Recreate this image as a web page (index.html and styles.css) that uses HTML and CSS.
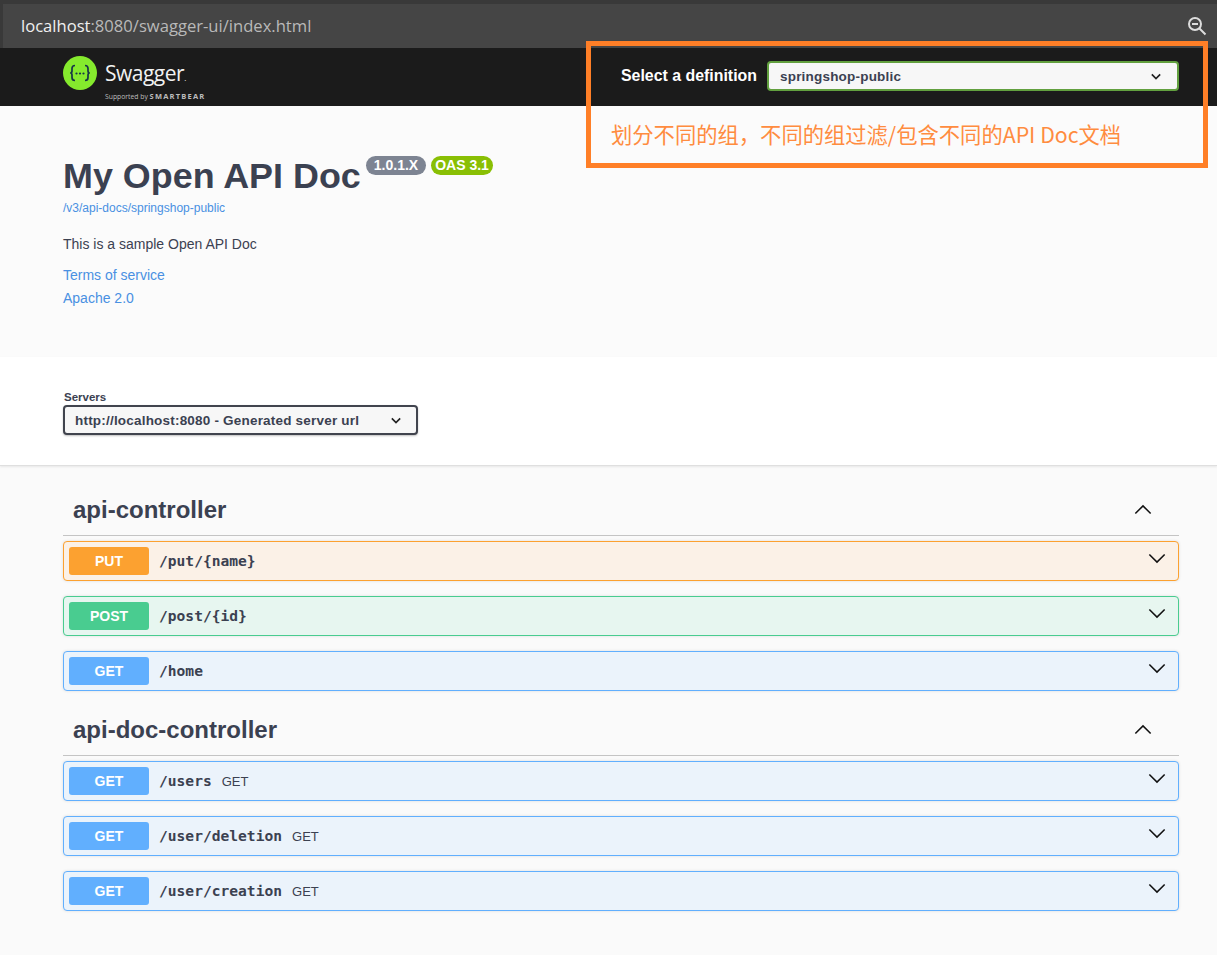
FILE: index.html
```html
<!DOCTYPE html>
<html lang="en">
<head>
    <meta charset="UTF-8">
    <meta name="viewport" content="width=device-width, initial-scale=1.0">
    <title>Swagger UI</title>
    <link rel="stylesheet" href="styles.css">
</head>
<body>
    <div class="url-bar">
        <div class="url-field">
            <span class="url-text"><span class="url-host">localhost</span>:8080/swagger-ui/index.html</span>
            <svg class="zoom-icon" viewBox="0 0 20 20" width="20" height="20" fill="none" stroke="#dcdcdc" stroke-width="2">
                <circle cx="8" cy="8" r="6"/>
                <path d="M5 8h6M12.500 12.500l6 6"/>
            </svg>
        </div>
    </div>

    <header class="topbar">
        <div class="logo">
            <svg class="logo-mark" viewBox="0 0 34 34" width="34" height="34">
                <circle cx="17" cy="17" r="17" fill="#85ea2d"/>
                <path d="M12 9.500c-2.600 0-3 1.200-3 3v2.500c0 1.300-.7 2-1.800 2 1.100 0 1.800.7 1.800 2v2.500c0 1.800.4 3 3 3M22 9.500c2.600 0 3 1.200 3 3v2.500c0 1.300.7 2 1.800 2-1.100 0-1.800.7-1.800 2v2.500c0 1.800-.4 3-3 3" fill="none" stroke="#173647" stroke-width="1.700"/>
                <circle cx="13.500" cy="17.500" r="1.100" fill="#173647"/>
                <circle cx="17" cy="17.500" r="1.100" fill="#173647"/>
                <circle cx="20.500" cy="17.500" r="1.100" fill="#173647"/>
            </svg>
            <div class="logo-text">
                <span class="logo-name">Swagger<small>.</small></span>
                <span class="logo-sub">Supported by <b>SMARTBEAR</b></span>
            </div>
        </div>
        <div class="definition">
            <span class="definition-label">Select a definition</span>
            <div class="select definition-select">
                <span>springshop-public</span>
                <svg viewBox="0 0 12 8" width="10" height="7" fill="none" stroke="#222" stroke-width="2"><path d="M1 1.500l5 5 5-5"/></svg>
            </div>
        </div>
    </header>

    <section class="info">
        <div class="title-row">
            <h1>My Open API Doc</h1>
            <div class="badges">
                <span class="badge badge-version">1.0.1.X</span>
                <span class="badge badge-oas">OAS 3.1</span>
            </div>
        </div>
        <a class="doc-link">/v3/api-docs/springshop-public</a>
        <p class="description">This is a sample Open API Doc</p>
        <a class="info-link terms">Terms of service</a>
        <a class="info-link">Apache 2.0</a>
    </section>

    <section class="servers">
        <div class="servers-label">Servers</div>
        <div class="select servers-select">
            <span>http://localhost:8080 - Generated server url</span>
            <svg viewBox="0 0 12 8" width="10" height="7" fill="none" stroke="#222" stroke-width="2"><path d="M1 1.500l5 5 5-5"/></svg>
        </div>
    </section>

    <main class="operations">
        <div class="tag">
            <h3>api-controller</h3>
            <svg viewBox="0 0 20 12" width="18" height="11" fill="none" stroke="#111" stroke-width="1.700"><path d="M1.500 10.500l8.500-8.500 8.500 8.500"/></svg>
        </div>
        <div class="opblock opblock-put">
            <span class="method">PUT</span>
            <span class="path">/put/{name}</span>
            <svg class="chevron" viewBox="0 0 20 12" width="18" height="11" fill="none" stroke="#111" stroke-width="1.700"><path d="M1.500 1.500l8.500 8.500 8.500-8.500"/></svg>
        </div>
        <div class="opblock opblock-post">
            <span class="method">POST</span>
            <span class="path">/post/{id}</span>
            <svg class="chevron" viewBox="0 0 20 12" width="18" height="11" fill="none" stroke="#111" stroke-width="1.700"><path d="M1.500 1.500l8.500 8.500 8.500-8.500"/></svg>
        </div>
        <div class="opblock opblock-get">
            <span class="method">GET</span>
            <span class="path">/home</span>
            <svg class="chevron" viewBox="0 0 20 12" width="18" height="11" fill="none" stroke="#111" stroke-width="1.700"><path d="M1.500 1.500l8.500 8.500 8.500-8.500"/></svg>
        </div>

        <div class="tag tag-second">
            <h3>api-doc-controller</h3>
            <svg viewBox="0 0 20 12" width="18" height="11" fill="none" stroke="#111" stroke-width="1.700"><path d="M1.500 10.500l8.500-8.500 8.500 8.500"/></svg>
        </div>
        <div class="opblock opblock-get">
            <span class="method">GET</span>
            <span class="path">/users</span>
            <span class="summary">GET</span>
            <svg class="chevron" viewBox="0 0 20 12" width="18" height="11" fill="none" stroke="#111" stroke-width="1.700"><path d="M1.500 1.500l8.500 8.500 8.500-8.500"/></svg>
        </div>
        <div class="opblock opblock-get">
            <span class="method">GET</span>
            <span class="path">/user/deletion</span>
            <span class="summary">GET</span>
            <svg class="chevron" viewBox="0 0 20 12" width="18" height="11" fill="none" stroke="#111" stroke-width="1.700"><path d="M1.500 1.500l8.500 8.500 8.500-8.500"/></svg>
        </div>
        <div class="opblock opblock-get">
            <span class="method">GET</span>
            <span class="path">/user/creation</span>
            <span class="summary">GET</span>
            <svg class="chevron" viewBox="0 0 20 12" width="18" height="11" fill="none" stroke="#111" stroke-width="1.700"><path d="M1.500 1.500l8.500 8.500 8.500-8.500"/></svg>
        </div>
    </main>

    <div class="annotation">
        <span class="annotation-text">划分不同的组，不同的组过滤/包含不同的API Doc文档</span>
    </div>
</body>
</html>
```

FILE: styles.css
```css
html, body {
    margin: 0;
    padding: 0;
}
body {
    position: relative;
    height: 955px;
    overflow: hidden;
    background-color: #fafafa;
    color: #3b4151;
    font-family: 'Liberation Sans', Arial, sans-serif;
}
h1, h3, p {
    margin: 0;
}

.url-bar {
    height: 48px;
    padding: 4px 0 0 3px;
    box-sizing: border-box;
    background-color: #393939;
}
.url-field {
    height: 44px;
    display: flex;
    align-items: center;
    justify-content: space-between;
    padding: 0 10px 0 18px;
    background-color: #454545;
}
.url-text {
    font-family: 'Open Sans', sans-serif;
    font-size: 16.600px;
    color: #b9b9b9;
    position: relative;
    top: -1px;
}
.url-host {
    color: #f0f0f0;
}

.topbar {
    height: 58px;
    display: flex;
    align-items: center;
    justify-content: space-between;
    padding: 0 38px 2px 63px;
    box-sizing: border-box;
    background-color: #1b1b1b;
}
.logo {
    display: flex;
    align-items: flex-start;
    gap: 8px;
    align-self: flex-start;
    padding-top: 8px;
}
.logo-text {
    display: flex;
    flex-direction: column;
    margin-top: 5px;
}
.logo-name {
    font-family: 'Open Sans', sans-serif;
    font-size: 21px;
    line-height: 24px;
    letter-spacing: -0.5px;
    color: #f2f2f2;
}
.logo-name small {
    font-size: 8px;
}
.logo-sub {
    margin-top: 1px;
    font-family: 'Open Sans', sans-serif;
    font-size: 6.800px;
    line-height: 10px;
    color: #bdbdbd;
}
.logo-sub b {
    font-size: 7.500px;
    letter-spacing: 1.200px;
}
.definition {
    display: flex;
    align-items: center;
    gap: 10px;
}
.definition-label {
    font-size: 15.900px;
    font-weight: bold;
    color: #ffffff;
}
.select {
    display: flex;
    align-items: center;
    justify-content: space-between;
    box-sizing: border-box;
    background-color: #f7f7f7;
    font-size: 13.500px;
    font-weight: bold;
    color: #3b4151;
    letter-spacing: 0.2px;
}
.definition-select {
    width: 412px;
    height: 30px;
    padding: 0 16px 0 11px;
    border: 2px solid #62a03f;
    border-radius: 4px;
}

.info {
    height: 251px;
    box-sizing: border-box;
    padding: 50px 38px 0 63px;
    background-color: #fbfbfb;
}
.title-row {
    display: flex;
    align-items: flex-start;
    gap: 5px;
}
h1 {
    font-size: 35.900px;
    line-height: 41px;
}
.badges {
    display: flex;
    gap: 5px;
}
.badge {
    height: 19px;
    line-height: 19px;
    padding: 0 8px;
    border-radius: 10px;
    font-size: 14px;
    font-weight: bold;
    color: #ffffff;
}
.badge-version {
    background-color: #7d8492;
}
.badge-oas {
    padding: 0 4px;
    background-color: #89bf04;
}
.doc-link {
    display: block;
    margin-top: 4px;
    font-size: 12px;
    line-height: 14px;
    color: #4990e2;
}
.description {
    margin-top: 21px;
    font-size: 14px;
    line-height: 16px;
}
.info-link {
    display: block;
    margin-top: 7px;
    font-size: 14px;
    line-height: 16px;
    color: #4990e2;
}
.terms {
    margin-top: 15px;
}

.servers {
    height: 109px;
    box-sizing: border-box;
    padding: 33px 0 0 63px;
    background-color: #ffffff;
    border-bottom: 1px solid #dfdfdf;
    box-shadow: 0 1px 2px rgba(0, 0, 0, 0.08);
}
.servers-label {
    padding-left: 1px;
    font-size: 11.500px;
    font-weight: bold;
    line-height: 14px;
    margin-bottom: 1px;
}
.servers-select {
    width: 355px;
    height: 30px;
    padding: 0 15px 0 10px;
    border: 2px solid #41444e;
    border-radius: 4px;
    box-shadow: 0 1px 2px rgba(0, 0, 0, 0.25);
}

.operations {
    padding: 21px 38px 0 63px;
}
.tag {
    height: 49px;
    display: flex;
    align-items: center;
    justify-content: space-between;
    box-sizing: border-box;
    padding: 0 27px 2px 10px;
    border-bottom: 1px solid #c4c4c4;
    margin-bottom: 5px;
}
.tag svg {
    margin-bottom: 2px;
}
.tag-second {
    margin-top: 16px;
}
h3 {
    font-size: 24px;
    font-weight: bold;
}
.opblock {
    height: 40px;
    display: flex;
    align-items: center;
    box-sizing: border-box;
    padding: 0 12px 0 5px;
    margin-bottom: 15px;
    border: 1px solid;
    border-radius: 4px;
    box-shadow: 0 0 3px rgba(0, 0, 0, 0.12);
}
.opblock-put {
    background-color: #fbf1e7;
    border-color: #fca130;
}
.opblock-post {
    background-color: #e7f6f0;
    border-color: #49cc90;
}
.opblock-get {
    background-color: #ebf3fb;
    border-color: #61affe;
}
.method {
    width: 80px;
    height: 28px;
    line-height: 29px;
    flex: none;
    border-radius: 3px;
    text-align: center;
    font-size: 14px;
    font-weight: bold;
    color: #ffffff;
}
.opblock-put .method {
    background-color: #fca130;
}
.opblock-post .method {
    background-color: #49cc90;
}
.opblock-get .method {
    background-color: #61affe;
}
.path {
    margin-left: 10px;
    margin-bottom: 1px;
    font-family: 'DejaVu Sans Mono', monospace;
    font-size: 14.600px;
    font-weight: bold;
}
.summary {
    margin-left: 10px;
    font-size: 13px;
}
.chevron {
    margin-left: auto;
    position: relative;
    top: -3px;
}

.annotation {
    position: absolute;
    left: 586px;
    top: 41px;
    width: 622px;
    height: 127px;
    box-sizing: border-box;
    border: 5px solid #ff7f27;
}
.annotation-text {
    position: absolute;
    left: 20px;
    top: 73px;
    font-family: 'Noto Sans CJK SC', 'Liberation Sans', sans-serif;
    font-size: 21.300px;
    line-height: 30px;
    white-space: nowrap;
    color: #ff8c3f;
}
```
